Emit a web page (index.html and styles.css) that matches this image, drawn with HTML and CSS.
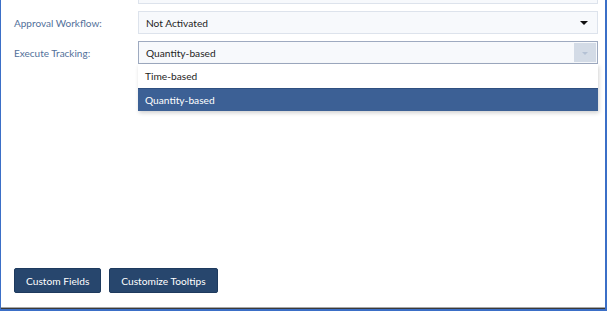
FILE: index.html
```html
<!DOCTYPE html>
<html>
<head>
    <title>Settings</title>
    <meta charset="UTF-8">
    <link rel="stylesheet" href="styles.css">
</head>
<body>
    <div class="window">
        <div class="content">
            <div class="form">
                <div class="form-row">
                    <div class="label"></div>
                    <div class="field"></div>
                </div>
                <div class="form-row">
                    <div class="label">Approval Workflow:</div>
                    <div class="field select">
                        <span>Not Activated</span>
                        <span class="caret"></span>
                    </div>
                </div>
                <div class="form-row">
                    <div class="label">Execute Tracking:</div>
                    <div class="combo">
                        <div class="field select open">
                            <span>Quantity-based</span>
                            <span class="combo-btn"><span class="caret light"></span></span>
                        </div>
                        <ul class="menu">
                            <li>Time-based</li>
                            <li class="active">Quantity-based</li>
                        </ul>
                    </div>
                </div>
            </div>

            <div class="actions">
                <button>Custom Fields</button>
                <button>Customize Tooltips</button>
            </div>
        </div>
    </div>
</body>
</html>
```

FILE: styles.css
```css
* {
    margin: 0;
    padding: 0;
    box-sizing: border-box;
}

html, body {
    height: 100%;
}

body {
    font-family: Lato, "Open Sans", sans-serif;
    font-size: 10.2px;
    background: #ffffff;
    overflow: hidden;
}

.window {
    height: 311px;
    border-style: solid;
    border-color: #3b6fc7;
    border-width: 0 2px 2px 1px;
}

.content {
    height: 100%;
    display: flex;
    flex-direction: column;
    background: #ffffff;
    border-bottom: 1px solid #3a3a3a;
    box-shadow: inset 0 -2px 0 -1px #a8a8a8;
    padding: 0 7px 0 13px;
}

.form {
    margin-top: -19px;
    display: flex;
    flex-direction: column;
    gap: 7px;
}

.form-row {
    display: grid;
    grid-template-columns: 124px 1fr;
    align-items: center;
}

.label {
    font-size: 10px;
    color: #52709a;
}

.field {
    height: 23px;
    background: #f7f9fc;
    border: 1px solid #dde3ec;
}

.select {
    display: flex;
    align-items: center;
    justify-content: space-between;
    padding: 0 9px 0 7px;
    color: #1e1e1e;
}

.caret {
    width: 0;
    height: 0;
    border-left: 4px solid transparent;
    border-right: 4px solid transparent;
    border-top: 4px solid #111111;
    margin-top: 1px;
}

.caret.light {
    border-left-width: 3px;
    border-right-width: 3px;
    border-top: 3px solid #b4c1d4;
}

.combo {
    position: relative;
}

.select.open {
    border-color: #9eaac0;
    padding-right: 1px;
}

.combo-btn {
    width: 22px;
    height: 19px;
    background: #d3dbe6;
    display: flex;
    align-items: center;
    justify-content: center;
}

.menu {
    position: absolute;
    left: 0;
    right: 0;
    top: 23px;
    list-style: none;
    background: #ffffff;
    box-shadow: 1px 2px 4px rgba(0, 0, 0, 0.18);
    color: #1e1e1e;
}

.menu li {
    height: 24px;
    line-height: 24px;
    padding-left: 7px;
}

.menu li.active {
    height: 23px;
    line-height: 22px;
    background: #3c6095;
    color: #ffffff;
    border-top: 1px solid #2f4f80;
}

.actions {
    margin-top: auto;
    margin-bottom: 15px;
    display: flex;
    gap: 8px;
}

button {
    height: 25px;
    padding: 0 11px;
    background: #27466d;
    color: #ffffff;
    border: 1px solid #1e3a5e;
    border-radius: 2px;
    font-family: Lato, "Open Sans", sans-serif;
    font-size: 10.2px;
    cursor: pointer;
}
```
